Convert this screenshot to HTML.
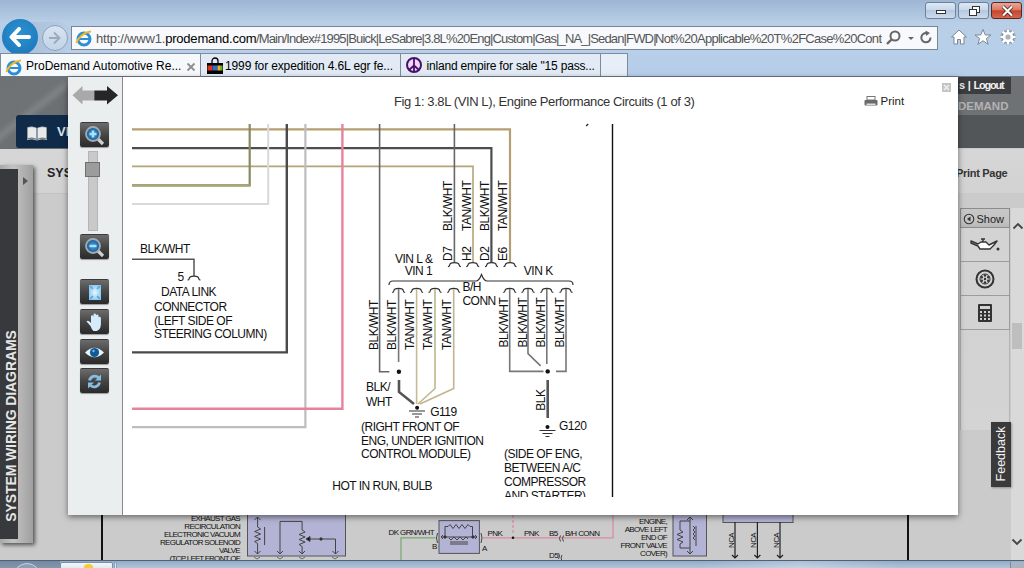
<!DOCTYPE html>
<html><head><meta charset="utf-8">
<style>
*{margin:0;padding:0;box-sizing:border-box}
html,body{width:1024px;height:568px;overflow:hidden;background:#b8c9dc;font-family:"Liberation Sans",sans-serif}
.a{position:absolute}
#chrome{left:0;top:0;width:1024px;height:77px;background:linear-gradient(#9db6d3 0px,#b9cfe7 23px,#b8cfe9 50px,#b5cde9 77px)}
.wb{top:2px;height:17px;border:1px solid #6f819a;border-radius:3px;background:linear-gradient(#dde8f5,#c8d8ea 45%,#b4c8df 50%,#cddbeb)}
#addr{left:71px;top:26px;width:867px;height:24px;background:#f7f9fc;border:1px solid #7a8594}
.tab{top:53px;height:24px;border:1px solid #7f8b9a;border-bottom:none;background:#e1eaf5;font-size:12px;color:#000;white-space:nowrap;overflow:hidden}
.tab span{position:absolute;top:5px;letter-spacing:-0.18px}
#page{left:0;top:77px;width:1024px;height:483px;background:#cbcbcb;overflow:hidden}
#taskbar{left:0;top:560px;width:1024px;height:8px;overflow:hidden;background:linear-gradient(#93abc5,#b0c5db);border-top:1px solid #4f6178}
.tb{left:80px;width:29px;height:25px;border-radius:2px;background:linear-gradient(#6c6c6c,#454545 50%,#2a2a2a);border-top:1px solid #3a3a3a;box-shadow:0 1px 1px rgba(0,0,0,.35)}
.tb svg{position:absolute;left:0;top:0}
.dt{font-size:12px;letter-spacing:-0.5px;fill:#111}
.cell{left:960px;width:50px;background:#d3d3d3;border:1px solid #9c9c9c;border-top:none}
</style></head><body>
<div id="chrome" class="a">
  
  <div class="a wb" style="left:925px;width:31px"><div class="a" style="left:10px;top:7px;width:10px;height:4px;background:#fff;border:1px solid #333"></div></div>
  <div class="a wb" style="left:958px;width:31px"><svg class="a" style="left:9px;top:2px" width="13" height="12"><rect x="4.5" y="1.5" width="7" height="6" fill="#fff" stroke="#333"/><rect x="1.5" y="4.5" width="7" height="6" fill="#fff" stroke="#333"/></svg></div>
  <div class="a wb" style="left:991px;width:31px;background:linear-gradient(#eba595,#dc7a63 45%,#c8452d 52%,#d5674f);border-color:#5a2820"><svg class="a" style="left:9px;top:2px" width="13" height="12"><path d="M2 1.5L11 10.5M11 1.5L2 10.5" stroke="#3a1a14" stroke-width="3.6"/><path d="M2 1.5L11 10.5M11 1.5L2 10.5" stroke="#fff" stroke-width="2.2"/></svg></div>
  <div id="addr" class="a"></div>
  <!-- back -->
  <div class="a" style="left:24px;top:22px;width:50px;height:32px;background:linear-gradient(90deg,rgba(160,180,205,.6),rgba(190,208,230,0));border-radius:0 16px 16px 0"></div>
  <div class="a" style="left:2px;top:19px;width:36px;height:36px;border-radius:50%;background:radial-gradient(circle at 50% 40%,#2d91d2,#1874b7)"></div>
  <svg class="a" style="left:9px;top:27px" width="22" height="20"><path d="M10 2L2.5 10L10 18M3 10H20" fill="none" stroke="#fff" stroke-width="4" stroke-linecap="round" stroke-linejoin="round"/></svg>
  <div class="a" style="left:42px;top:25px;width:26px;height:26px;border-radius:50%;border:1px solid #8fa3bb;background:linear-gradient(#d6e3f1,#c3d4e8)"></div>
  <svg class="a" style="left:46px;top:30px" width="18" height="16"><path d="M8 2.5L13.5 8L8 13.5M3 8H13" fill="none" stroke="#9aa9bb" stroke-width="1.8"/></svg>
  <!-- IE icon in addr -->
  <svg class="a" style="left:75px;top:29px" width="18" height="18"><circle cx="9" cy="10" r="6" fill="none" stroke="#2a8fd8" stroke-width="3"/><path d="M4 10H14" stroke="#2a8fd8" stroke-width="2"/><path d="M1.5 14C3 9 9 3 16 2.5" fill="none" stroke="#f2b825" stroke-width="2"/></svg>
  <div class="a" style="left:96px;top:31px;width:786px;height:16px;overflow:hidden;font-size:13px;color:#555;white-space:nowrap">
    <span class="a" style="left:0;top:0;letter-spacing:-0.2px">http://www1.<span style="color:#000">prodemand.com</span></span>
    <span class="a" style="left:160px;top:0;letter-spacing:-0.85px">/Main/Index#1995|Buick|LeSabre|3.8L%20Eng|Custom|Gas|_NA_|Sedan|FWD|</span>
    <span class="a" style="left:559px;top:0;letter-spacing:-0.72px">Not%20Applicable%20T%2FCase%20Control</span>
  </div>
  <div class="a" style="left:884px;top:27px;width:53px;height:22px;background:#f7f9fc"></div>
  <svg class="a" style="left:884px;top:29px" width="50" height="18"><circle cx="11" cy="7" r="4.5" fill="none" stroke="#666" stroke-width="2"/><path d="M8 10L3 15" stroke="#666" stroke-width="2.4"/><path d="M24 8H30L27 11Z" fill="#666"/><path d="M46.5 8.5A4.6 4.6 0 1 1 43 4.2" fill="none" stroke="#666" stroke-width="2"/><path d="M41.5 1.5L46 4L42 7Z" fill="#666"/></svg>
  <!-- home star gear -->
  <svg class="a" style="left:950px;top:28px" width="70" height="20"><path d="M9 2L1.5 9H4V16H7.5V11.5H10.5V16H14V9H16.5Z" fill="#fff" stroke="#7a8797" stroke-width="1"/><path d="M33 1.5L35.3 7H41L36.4 10.5L38.1 16.3L33 12.8L27.9 16.3L29.6 10.5L25 7H30.7Z" fill="#fff" stroke="#7a8797" stroke-width="1"/><path d="M58 1.5V16.5M50.5 9H65.5M52.7 3.7L63.3 14.3M63.3 3.7L52.7 14.3" stroke="#7a8797" stroke-width="4.4"/><circle cx="58" cy="9" r="6.2" fill="#7a8797"/><path d="M58 1.5V16.5M50.5 9H65.5M52.7 3.7L63.3 14.3M63.3 3.7L52.7 14.3" stroke="#fff" stroke-width="2.6"/><circle cx="58" cy="9" r="5.2" fill="#fff"/><circle cx="58" cy="9" r="2.6" fill="#a9b3bf"/></svg>
  <!-- tabs -->
  <div class="a tab" style="left:0;width:201px;background:#f6f9fc"><span style="left:25px;letter-spacing:0px">ProDemand Automotive Re...</span>
    <svg class="a" style="left:4px;top:4px" width="18" height="18"><circle cx="9" cy="10" r="6" fill="none" stroke="#2a8fd8" stroke-width="3"/><path d="M4 10H14" stroke="#2a8fd8" stroke-width="2"/><path d="M1.5 14C3 9 9 3 16 2.5" fill="none" stroke="#f2b825" stroke-width="2"/></svg>
    <svg class="a" style="left:185px;top:8px" width="10" height="10"><path d="M1.5 1.5L8.5 8.5M8.5 1.5L1.5 8.5" stroke="#8e8e8e" stroke-width="1.8"/></svg>
  </div>
  <div class="a tab" style="left:200px;width:201px"><span style="left:24px;letter-spacing:-0.13px">1999 for expedition 4.6L egr fe...</span>
    <svg class="a" style="left:5px;top:3px" width="18" height="18"><path d="M6 6V4A3 3 0 0 1 12 4V6" fill="none" stroke="#000" stroke-width="1.3"/><rect x="1" y="6" width="16" height="11" fill="#000"/><rect x="1.5" y="8.5" width="5" height="5" fill="#e03020"/><rect x="6.5" y="8.5" width="5" height="5" fill="#2a6fd0"/><rect x="11.5" y="8.5" width="2.5" height="5" fill="#f0b020"/><rect x="14" y="8.5" width="2.5" height="5" fill="#70b030"/></svg>
  </div>
  <div class="a tab" style="left:400px;width:201px"><span style="left:25.5px;letter-spacing:-0.18px">inland empire for sale "15 pass...</span>
    <svg class="a" style="left:4px;top:2px" width="18" height="18"><circle cx="9" cy="9" r="7" fill="#f3d6f6" stroke="#44136a" stroke-width="2"/><path d="M9 2V16M9 9.5L4 14M9 9.5L14 14" stroke="#44136a" stroke-width="1.8"/></svg>
  </div>
  <div class="a tab" style="left:600px;width:28px;background:#e6eef8"></div>
  <div class="a" style="left:0;top:76px;width:1024px;height:1px;background:#6c7683"></div>
</div>
<div id="page" class="a">
  <!-- header -->
  <div class="a" style="left:0;top:0;width:1024px;height:71px;background:linear-gradient(45deg,#6a6d70 0%,#6d7073 46%,#808386 52%,#6e7174 58%,#6f7275 100%)"></div>
  <div class="a" style="left:0;top:0;width:70px;height:72px;background:linear-gradient(142deg,#6f7275 0%,#707376 40%,#7f8285 47%,#6d7073 54%,#696c6f 100%)"></div>
  <div class="a" style="left:958px;top:38px;width:66px;height:33px;background:#535659"></div>
  <div class="a" style="left:958px;top:0;width:66px;height:38px;background:#6f7275"></div>
  <div class="a" style="left:16px;top:38px;width:60px;height:33px;background:#0f2b49;border-radius:3px"></div>
  <svg class="a" style="left:26px;top:48px" width="22" height="16"><path d="M1.5 2.5Q6 1 10.5 3V14Q6 12 1.5 13.5Z M11.5 3Q16 1 20.5 2.5V13.5Q16 12 11.5 14Z" fill="#e9e9e9" stroke="#9aa" stroke-width=".6"/><path d="M1 14.5Q6 13 11 15Q16 13 21 14.5" fill="none" stroke="#bbb" stroke-width="1"/></svg>
  <div class="a" style="left:57px;top:47px;font-size:13px;font-weight:bold;color:#dfe3e8">VE</div>
  <div class="a" style="left:958px;top:0;width:53px;height:17px;background:#3b3d40"></div>
  <div class="a" style="left:959px;top:2px;font-size:11px;font-weight:bold;letter-spacing:-1.2px;word-spacing:2px;color:#f0f0f0;white-space:nowrap">s | Logout</div>
  <div class="a" style="left:958px;top:23px;font-size:11.5px;font-weight:bold;color:#b3b3b3;white-space:nowrap">DEMAND</div>
  <!-- left body -->
  <div class="a" style="left:0;top:72px;width:1024px;height:44px;background:linear-gradient(#d6d6d6,#d2d2d2)"></div><div class="a" style="left:0;top:116px;width:100px;height:1px;background:#c4c4c4"></div>
  <div class="a" style="left:47px;top:88.5px;font-size:12.5px;font-weight:bold;color:#222">SYSTEM</div>
  <div class="a" style="left:0;top:88px;width:33px;height:378px;background:linear-gradient(90deg,#a8a8a8,#c2c2c2 40%,#a0a0a0);box-shadow:2px 2px 4px rgba(0,0,0,.6)"></div>
  <div class="a" style="left:0;top:92px;width:18px;height:370px;background:#37393c"></div>
  <svg class="a" style="left:22px;top:99px" width="8" height="10"><path d="M1 1L6 5L1 9Z" fill="#555"/></svg>
  <div class="a" style="left:-85px;top:341px;width:192px;transform:rotate(-90deg);font-size:14px;font-weight:bold;letter-spacing:-0.1px;color:#e6e6e6;white-space:nowrap;text-align:center">SYSTEM WIRING DIAGRAMS</div>
  <!-- right body -->
  <div class="a" style="left:956px;top:90px;font-size:11px;font-weight:bold;letter-spacing:-0.3px;color:#333;white-space:nowrap">Print Page</div>
  <div class="a" style="left:958px;top:116px;width:53px;height:1px;background:#cbcbcb"></div>
  <div class="a" style="left:960px;top:131px;width:50px;height:20px;background:linear-gradient(#c8c8c8,#c2c2c2 70%,#b8b8b8);border:1px solid #8c8c8c"></div>
  <svg class="a" style="left:963px;top:136px" width="12" height="12"><circle cx="6" cy="6" r="4.8" fill="none" stroke="#333" stroke-width="1.1"/><path d="M7.5 3.5L4 6L7.5 8.5Z" fill="#333"/></svg>
  <div class="a" style="left:976.5px;top:136px;font-size:11px;color:#222">Show</div>
  <div class="a cell" style="top:151px;height:34px"></div>
  <div class="a cell" style="top:185px;height:34px"></div>
  <div class="a cell" style="top:219px;height:34px"></div>
  <div class="a cell" style="top:253px;height:100px;background:linear-gradient(#d2d2d2,#d4d4d4);border-color:#b4b4b4;border-bottom:none"></div>
  <svg class="a" style="left:968px;top:158px" width="34" height="22"><path d="M3 6L10 9L13 7H18L21 10L29 6L26 10L22 14H12L10 11L3 8Z" fill="#fff" stroke="#333" stroke-width="1.4" stroke-linejoin="round"/><path d="M15 7V4M13 4H17" stroke="#333" stroke-width="1.4"/><circle cx="30" cy="14" r="1.5" fill="#333"/></svg>
  <svg class="a" style="left:974px;top:191px" width="22" height="22"><circle cx="11" cy="11" r="8.5" fill="none" stroke="#333" stroke-width="2"/><circle cx="11" cy="11" r="5" fill="none" stroke="#333" stroke-width="1"/><g fill="#333"><circle cx="11" cy="7.5" r="1.2"/><circle cx="11" cy="14.5" r="1.2"/><circle cx="7.8" cy="9.3" r="1.2"/><circle cx="14.2" cy="9.3" r="1.2"/><circle cx="7.8" cy="12.7" r="1.2"/><circle cx="14.2" cy="12.7" r="1.2"/><circle cx="11" cy="11" r="1.2"/></g></svg>
  <svg class="a" style="left:977px;top:226px" width="16" height="20"><rect x="1" y="1" width="14" height="18" rx="1" fill="#333"/><rect x="3" y="3" width="10" height="3" fill="#d3d3d3"/><g fill="#d3d3d3"><rect x="3" y="8" width="2" height="2"/><rect x="7" y="8" width="2" height="2"/><rect x="11" y="8" width="2" height="2"/><rect x="3" y="11.5" width="2" height="2"/><rect x="7" y="11.5" width="2" height="2"/><rect x="11" y="11.5" width="2" height="2"/><rect x="3" y="15" width="2" height="2"/><rect x="7" y="15" width="2" height="2"/><rect x="11" y="15" width="2" height="2"/></g></svg>
  <div class="a" style="left:1011px;top:131px;width:13px;height:352px;background:#d9d9d9"></div>
  <svg class="a" style="left:1012px;top:144px" width="12" height="10"><path d="M1.5 7.5L6 3L10.5 7.5" fill="none" stroke="#444" stroke-width="1.8"/></svg>
  <div class="a" style="left:1012px;top:246px;width:10px;height:26px;background:#bebebe"></div>
  <svg class="a" style="left:1011px;top:460px" width="12" height="10"><path d="M1.5 2.5L6 7L10.5 2.5" fill="none" stroke="#444" stroke-width="1.8"/></svg>
  <div class="a" style="left:991px;top:345px;width:20px;height:65px;background:#3a3a3a;box-shadow:1px 1px 2px rgba(0,0,0,.3)"></div>
  <div class="a" style="left:973px;top:370px;width:56px;transform:rotate(-90deg);font-size:12.5px;color:#f2f2f2;text-align:center;white-space:nowrap">Feedback</div>
  <!-- bottom bg diagram -->
  <div class="a" style="left:101px;top:420px;width:808px;height:63px;background:#cbcbcb;border-left:2px solid #111;border-right:2px solid #111"></div>
  <svg class="a" style="left:0;top:0" width="1024" height="483" viewBox="0 77 1024 483">
    <g font-size="8" fill="#111" letter-spacing="-0.7" text-anchor="end">
      <text x="240" y="521.0">EXHAUST GAS</text>
      <text x="240" y="529.0">RECIRCULATION</text>
      <text x="240" y="537.0">ELECTRONIC VACUUM</text>
      <text x="240" y="545.0">REGULATOR SOLENOID</text>
      <text x="240" y="553.0">VALVE</text>
      <text x="240" y="561.0">(TCP LEFT FRONT OF</text>
      <text x="667" y="523.5">ENGINE,</text>
      <text x="667" y="531.5">ABOVE LEFT</text>
      <text x="667" y="539.5">END OF</text>
      <text x="667" y="547.5">FRONT VALVE</text>
      <text x="667" y="556">COVER)</text>
    </g>
    <g font-size="8" fill="#111" letter-spacing="-0.6">
      <text x="388.5" y="535">DK GRN/WHT</text>
      <text x="432" y="548.5">B</text>
      <text x="482" y="550.5">A</text>
      <text x="487.5" y="535.5">PNK</text>
      <text x="524" y="535.5">PNK</text>
      <text x="549" y="535.5">B5</text>
      <text x="565" y="535.5">B/H CONN</text>
      <text x="549" y="557.5">D5</text>
      <text transform="translate(733.5,548) rotate(-90)">NCA</text>
      <text transform="translate(756,548) rotate(-90)">NCA</text>
      <text transform="translate(778.5,548) rotate(-90)">NCA</text>
    </g>
    <g fill="none" stroke="#444" stroke-width="1">
      <rect x="247.5" y="510" width="98" height="46" fill="#b3b3d5" stroke="#555"/>
      <path d="M257.6 517V527l3 2-6 2.5 6 2.5-6 2.5 6 2.5-6 2.5 3 2V554M254.5 520l3-3 3 3M254.5 551l3 3 3-3M264.6 527V545"/>
      <path d="M280 554V521.4H302.1V530l3 2-6 2.5 6 2.5-6 2.5 6 2.5-6 2.5 3 2V554M277 551l3 3 3-3M299 551l3 3 3-3"/>
      <path d="M307 539H335.5V554M332.5 551l3 3 3-3"/>
      <path d="M306 539l4-2.5v5z" fill="#111"/>
      <circle cx="321" cy="539" r="1.2" fill="#111"/>
      <path d="M254 557l3 2 3-2M277 557l3 2 3-2M299 557l3 2 3-2M332 557l3 2 3-2" stroke="#666"/>
      <rect x="439" y="520.6" width="40.4" height="32.8" fill="#b3b3d5" stroke="#555"/>
      <path d="M445 537V526.5H448l2-2 3 4 3-4 3 4 3-4 3 4 3-4 2 2h2.5V537M441 537H477M443 535l-2 2 2 2M475 535l2 2-2 2M449 538l2 2 3-3 3 3 3-3 3 3 3-3 2 2M450 542H468M450 544H468"/>
      <circle cx="445" cy="537" r="1.2" fill="#111"/><circle cx="473" cy="537" r="1.2" fill="#111"/>
      <path d="M437.5 533q-2 5 0 10M481 533q2 5 0 10"/>
      <path d="M401 562V537.8H435.5" stroke="#7aa870" stroke-width="1.2"/>
      <path d="M483 537.8H613V510" stroke="#dc8aa2" stroke-width="1.3"/>
      <path d="M513 510V533" stroke="#dc8aa2" stroke-width="1.3" stroke-dasharray="3 2"/>
      <circle cx="513" cy="537.8" r="1.3" fill="#111" stroke="none"/>
      <path d="M560.5 535.5q-2 3 0 6M563.5 535.5q-2 3 0 6M558.5 553q2 3 0 6M562 555q-2 3 0 6"/>
      <rect x="673" y="510" width="33.5" height="46" fill="#b3b3d5" stroke="#555"/>
      <path d="M690 517V554M687 520l3-3 3 3M687 551l3 3 3-3M690 521H680V530l3 2-6 2.5 6 2.5-6 2.5 6 2.5-3 2V548H690M693 526l2 2-2 2 2 2-2 2 2 2-2 2 2 2M696 526V546"/>
      <rect x="723" y="505" width="70" height="17.5" fill="#b3b3d5" stroke="#555"/>
      <path d="M735 522V558M757.4 522V558M780 522V558M732 555l3 3 3-3M754.4 555l3 3 3-3M777 555l3 3 3-3" stroke="#222" stroke-width="1.2"/>
    </g>
  </svg>
</div>
<!-- modal -->
<div class="a" style="left:68px;top:77px;width:890px;height:438px;background:#fff;box-shadow:0 2px 6px rgba(0,0,0,.5)">
  <div class="a" style="left:0;top:0;width:55px;height:438px;background:#ebeeee;border-right:1px solid #8a8a8a"></div>
  <svg class="a" style="left:4px;top:9px" width="48" height="20"><path d="M0.5 9.2L10.5 0V4.6H22.3V14.6H10.5V18.4Z" fill="#a9a9a9"/><path d="M46 9.2L35 0V4.6H22.3V14.6H35V18.4Z" fill="#262626"/></svg>
  <div class="a" style="left:326px;top:17px;font-size:13px;letter-spacing:-0.4px;color:#333;white-space:nowrap">Fig 1: 3.8L (VIN L), Engine Performance Circuits (1 of 3)</div>
  <svg class="a" style="left:796px;top:19px" width="14" height="12"><rect x="3" y="0.5" width="8" height="3.5" fill="#fff" stroke="#777"/><rect x="0.5" y="4" width="13" height="5.5" rx="1" fill="#6a6a6a"/><rect x="2.5" y="7.5" width="9" height="1.5" fill="#ddd"/></svg>
  <div class="a" style="left:812.5px;top:18px;font-size:11.5px;color:#222">Print</div>
  <svg class="a" style="left:874px;top:6px" width="10" height="10"><rect x="0" y="0" width="9" height="9" fill="#c4c4c4"/><path d="M2 2L7 7M7 2L2 7" stroke="#eee" stroke-width="1.6"/></svg>
</div>
<div class="a tb" style="top:122px"><svg width="29" height="25"><defs><radialGradient id="lg"><stop offset="0" stop-color="#4aa6e6"/><stop offset="1" stop-color="#18558a"/></radialGradient></defs><path d="M18 16L23 21" stroke="#d0d0d0" stroke-width="3.2"/><circle cx="13" cy="11" r="7" fill="url(#lg)" stroke="#a3abb2" stroke-width="1.8"/><path d="M9.5 11H16.5M13 7.5V14.5" stroke="#a8e0ff" stroke-width="2.4"/></svg></div>
<div class="a tb" style="top:234px"><svg width="29" height="25"><path d="M18 16L23 21" stroke="#d0d0d0" stroke-width="3.2"/><circle cx="13" cy="11" r="7" fill="url(#lg)" stroke="#a3abb2" stroke-width="1.8"/><path d="M9.5 11H16.5" stroke="#a8e0ff" stroke-width="2.4"/></svg></div>
<div class="a tb" style="top:279px"><svg width="29" height="25"><defs><radialGradient id="fg"><stop offset="0" stop-color="#e8f7ff"/><stop offset="1" stop-color="#8ccbf5"/></radialGradient></defs><rect x="9" y="5" width="12" height="15" fill="url(#fg)"/><path d="M10 6l3 3M20 6l-3 3M10 19l3-3M20 19l-3-3" stroke="#5fa6d6" stroke-width="1.6"/></svg></div>
<div class="a tb" style="top:309px"><svg width="29" height="25"><path d="M10.5 16L6.5 11.5Q7.5 10 9.5 11.5L11 13V6.5Q11.2 5 12.4 5.2Q13.4 5.4 13.5 6.8V11V4.8Q13.7 3.4 14.9 3.5Q16 3.6 16.1 5V11V5.6Q16.3 4.3 17.4 4.4Q18.5 4.6 18.6 5.9V11.5V7.6Q18.9 6.5 19.9 6.7Q20.9 7 20.9 8.2V14.5Q20.6 19.5 16.8 21H13.5Q11.8 20 10.5 16Z" fill="#d6ecfb"/></svg></div>
<div class="a tb" style="top:339px"><svg width="29" height="25"><path d="M5 12.5Q14.5 3 24 12.5Q14.5 22 5 12.5Z" fill="#e6f4ff"/><circle cx="14.5" cy="12.5" r="4.6" fill="#125a96"/><circle cx="13.5" cy="11" r="1.2" fill="#7fb8e8"/></svg></div>
<div class="a tb" style="top:368px"><svg width="29" height="25"><path d="M9.5 11.5A5.5 5.5 0 0 1 18.5 8.5" fill="none" stroke="#86bde3" stroke-width="2.8"/><path d="M21 5.5V11.5H15Z" fill="#86bde3"/><path d="M19.5 13.5A5.5 5.5 0 0 1 10.5 16.5" fill="none" stroke="#86bde3" stroke-width="2.8"/><path d="M8 19.5V13.5H14Z" fill="#86bde3"/></svg></div>
<div class="a" style="left:88px;top:151px;width:10px;height:80px;background:#c9c9c9;border:1px solid #b5b5b5"></div>
<div class="a" style="left:85px;top:162px;width:15px;height:15px;background:#9c9c9c;border:1px solid #6f6f6f"></div>

<svg class="a" style="left:0;top:0" width="1024" height="568" viewBox="0 0 1024 568">
  <defs><clipPath id="cp"><rect x="123" y="115" width="834" height="382"/></clipPath></defs>
  <g clip-path="url(#cp)" fill="none" stroke-linecap="butt">
    <path d="M132 129.4H510V263" stroke="#b49e72" stroke-width="2.2"/>
    <path d="M132 148.1H491.4V263" stroke="#4d4d4d" stroke-width="2.2"/>
    <path d="M132 166.4H473V263" stroke="#b4a47a" stroke-width="1.6"/>
    <path d="M249.7 124V185.4H132" stroke="#8c8862" stroke-width="2.2"/>
    <path d="M268.2 124V203.9H132" stroke="#d9d9d9" stroke-width="2"/>
    <path d="M286.8 124V352.4H132" stroke="#4a4a4a" stroke-width="2.4"/>
    <path d="M305.4 124V427.1H132" stroke="#bdbdbd" stroke-width="2.2"/>
    <path d="M342.4 124V408.8H132" stroke="#e6839c" stroke-width="2.4"/>
    <path d="M379.6 124V371.7H389.4" stroke="#666" stroke-width="1.6"/>
    <path d="M454.4 124V263" stroke="#666" stroke-width="1.6"/>
    <path d="M132 185.4H249.7" stroke="#a8a474" stroke-width="2.4"/>
    <path d="M132 203.9H268.2" stroke="#d9d9d9" stroke-width="2"/>
    <path d="M132 259.3H194V276" stroke="#555" stroke-width="1.5"/>
    <path d="M187.5 280.0Q189.0 280.0 189.2 278.6C189.5 275.2 198.5 275.2 198.8 278.6Q199.0 280.0 200.5 280.0" stroke="#333" stroke-width="1.2"/>
    <path d="M447.9 266.6Q449.4 266.6 449.6 265.2C449.9 261.8 458.9 261.8 459.2 265.2Q459.4 266.6 460.9 266.6M466.2 266.6Q467.7 266.6 467.9 265.2C468.2 261.8 477.2 261.8 477.5 265.2Q477.7 266.6 479.2 266.6M485.0 266.6Q486.5 266.6 486.7 265.2C487.0 261.8 496.0 261.8 496.3 265.2Q496.5 266.6 498.0 266.6M503.5 266.6Q505.0 266.6 505.2 265.2C505.5 261.8 514.5 261.8 514.8 265.2Q515.0 266.6 516.5 266.6" stroke="#333" stroke-width="1.2"/>
    <path d="M389 285q0-4 4-4H476q3 0 5.5-6.5q2.5 6.5 5.5 6.5H569q4 0 4 4" stroke="#333" stroke-width="1.2"/>
    <path d="M392.1 292.4Q393.6 292.4 393.8 291.0C394.1 287.6 403.1 287.6 403.4 291.0Q403.6 292.4 405.1 292.4M410.1 292.4Q411.6 292.4 411.8 291.0C412.1 287.6 421.1 287.6 421.4 291.0Q421.6 292.4 423.1 292.4M428.5 292.4Q430.0 292.4 430.2 291.0C430.5 287.6 439.5 287.6 439.8 291.0Q440.0 292.4 441.5 292.4M447.2 292.4Q448.7 292.4 448.9 291.0C449.2 287.6 458.2 287.6 458.5 291.0Q458.7 292.4 460.2 292.4M503.2 292.4Q504.7 292.4 504.9 291.0C505.2 287.6 514.2 287.6 514.5 291.0Q514.7 292.4 516.2 292.4M521.5 292.4Q523.0 292.4 523.2 291.0C523.5 287.6 532.5 287.6 532.8 291.0Q533.0 292.4 534.5 292.4M540.3 292.4Q541.8 292.4 542.0 291.0C542.3 287.6 551.3 287.6 551.6 291.0Q551.8 292.4 553.3 292.4M559.5 292.4Q561.0 292.4 561.2 291.0C561.5 287.6 570.5 287.6 570.8 291.0Q571.0 292.4 572.5 292.4" stroke="#333" stroke-width="1.2"/>
    <path d="M398.6 289V362" stroke="#777" stroke-width="1.6"/>
    <path d="M399 380V392L414 404" stroke="#555" stroke-width="2.6"/>
    <path d="M416.6 289V404" stroke="#c9ba92" stroke-width="1.6"/>
    <path d="M435 289V388.5L418 404" stroke="#bab98a" stroke-width="1.6"/>
    <path d="M453.7 289V388.5L420 404" stroke="#c2b48c" stroke-width="1.6"/>
    <circle cx="398.9" cy="371.7" r="2.2" fill="#111"/>
    <circle cx="417.1" cy="407.7" r="2" fill="#111"/>
    <path d="M409 411H425M412 414H422M415 417H419" stroke="#333" stroke-width="1.2"/>
    <path d="M509.7 289V371.4H543.5" stroke="#777" stroke-width="1.6"/>
    <path d="M528 289V353.7L540.6 365.8" stroke="#777" stroke-width="1.6"/>
    <path d="M546.8 289V364" stroke="#777" stroke-width="1.6"/>
    <path d="M566 289V371.4H556" stroke="#777" stroke-width="1.6"/>
    <circle cx="547.7" cy="371.4" r="2.2" fill="#111"/>
    <path d="M547.7 380V418" stroke="#555" stroke-width="2.6"/>
    <circle cx="547.5" cy="426.9" r="2" fill="#111"/>
    <path d="M539.5 430.5H555.5M542.5 433.5H552.5M545.5 436.5H549.5" stroke="#333" stroke-width="1.2"/>
    <path d="M612.5 124V497" stroke="#111" stroke-width="1.4"/><path d="M586.2 126L588.2 124" stroke="#222" stroke-width="1.2"/>
  </g>
  <g clip-path="url(#cp)" class="dt">
    <text x="140" y="253">BLK/WHT</text>
    <text x="177.5" y="281">5</text>
    <text x="161" y="296">DATA LINK</text>
    <text x="154" y="310.5">CONNECTOR</text>
    <text x="154" y="324.5">(LEFT SIDE OF</text>
    <text x="154" y="338">STEERING COLUMN)</text>
    <text x="395" y="262.7">VIN L &amp;</text>
    <text x="404.7" y="275">VIN 1</text>
    <text x="523.8" y="275">VIN K</text>
    <text x="462.4" y="291.3">B/H</text>
    <text x="462.4" y="305">CONN</text>
    <text x="366" y="391">BLK/</text>
    <text x="366" y="406">WHT</text>
    <text x="430.2" y="416">G119</text>
    <text x="559" y="429.7">G120</text>
    <text x="361" y="431">(RIGHT FRONT OF</text>
    <text x="361" y="444.5">ENG, UNDER IGNITION</text>
    <text x="361" y="458">CONTROL MODULE)</text>
    <text x="332.3" y="490">HOT IN RUN, BULB</text>
    <text x="504" y="458">(SIDE OF ENG,</text>
    <text x="504" y="472">BETWEEN A/C</text>
    <text x="504" y="486">COMPRESSOR</text>
    <text x="504" y="500">AND STARTER)</text>
    <text transform="translate(452,231) rotate(-90)">BLK/WHT</text>
    <text transform="translate(471,231) rotate(-90)">TAN/WHT</text>
    <text transform="translate(489,231) rotate(-90)">BLK/WHT</text>
    <text transform="translate(507,231) rotate(-90)">TAN/WHT</text>
    <text transform="translate(452,261) rotate(-90)">D7</text>
    <text transform="translate(471,261) rotate(-90)">H2</text>
    <text transform="translate(489,261) rotate(-90)">D2</text>
    <text transform="translate(507,261) rotate(-90)">E6</text>
    <text transform="translate(377.7,350) rotate(-90)">BLK/WHT</text>
    <text transform="translate(395.7,350) rotate(-90)">BLK/WHT</text>
    <text transform="translate(414,350) rotate(-90)">TAN/WHT</text>
    <text transform="translate(432,350) rotate(-90)">TAN/WHT</text>
    <text transform="translate(451,350) rotate(-90)">TAN/WHT</text>
    <text transform="translate(508,347.5) rotate(-90)">BLK/WHT</text>
    <text transform="translate(527,347.5) rotate(-90)">BLK/WHT</text>
    <text transform="translate(545,347.5) rotate(-90)">BLK/WHT</text>
    <text transform="translate(564,347.5) rotate(-90)">BLK/WHT</text>
    <text transform="translate(544.6,410.8) rotate(-90)">BLK</text>
  </g>
</svg>
<div id="taskbar" class="a">
  <div class="a" style="left:0;top:0;width:60px;height:8px;background:linear-gradient(#74899f,#8499b0)"></div>
  <div class="a" style="left:13px;top:2px;width:28px;height:28px;border-radius:50%;border:1px solid #c5d3e2;background:#8aa0b8"></div>
  <div class="a" style="left:60px;top:1px;width:53px;height:8px;background:linear-gradient(#f4f7fb,#dfe7f0);border:1px solid #7d8fa5;border-radius:2px"></div>
  <div class="a" style="left:84px;top:3px;width:9px;height:6px;border-radius:50% 50% 0 0;background:#f0d030"></div>
  <div class="a" style="left:114px;top:1px;width:3px;height:7px;background:#dfe7f0;border:1px solid #8ea0b4"></div>
  <div class="a" style="left:700px;top:0;width:200px;height:8px;background:linear-gradient(90deg,rgba(255,255,255,0),rgba(255,255,255,.25),rgba(255,255,255,0))"></div>
  <div class="a" style="left:1010px;top:1px;width:14px;height:7px;background:#a9b4c0;border-left:1px solid #7a8896"></div>
</div>
</body></html>
